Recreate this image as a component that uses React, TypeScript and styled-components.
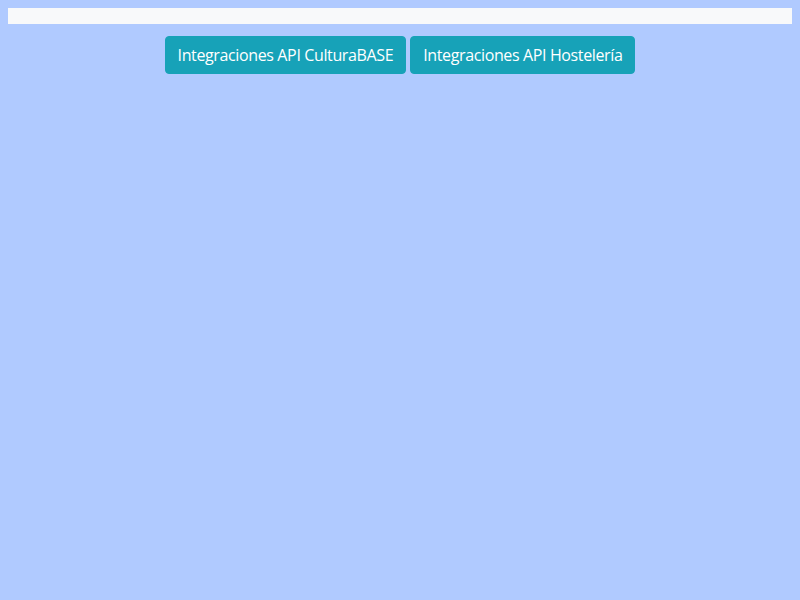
import styled, { createGlobalStyle } from "styled-components";

const Global = createGlobalStyle`
  html, body {
    margin: 0;
    background: #b0caff;
    min-height: 100%;
  }
  body {
    padding: 8px;
    font-family: "Open Sans", "Noto Sans", sans-serif;
  }
`;

const TopBar = styled.div`
  height: 16px;
  background: #f8f9fa;
`;

const ButtonRow = styled.div`
  display: flex;
  justify-content: center;
  gap: 4px;
  margin-top: 12px;
`;

const InfoButton = styled.button`
  height: 38px;
  padding: 0 12px;
  border: 1px solid #17a2b8;
  border-radius: 4px;
  background: #17a2b8;
  color: #fff;
  font-family: "Open Sans", "Noto Sans", sans-serif;
  font-size: 16px;
  line-height: 24px;
  letter-spacing: -0.37px;
  cursor: pointer;
`;

const App = () => {
  return (
    <>
      <Global />
      <TopBar />
      <ButtonRow>
        <InfoButton>Integraciones API CulturaBASE</InfoButton>
        <InfoButton>Integraciones API Hostelería</InfoButton>
      </ButtonRow>
    </>
  );
};

export default App;
